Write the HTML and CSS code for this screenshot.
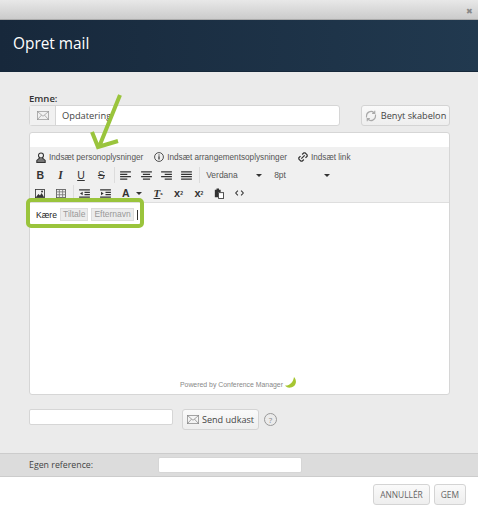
FILE: index.html
```html
<!DOCTYPE html>
<html lang="en">
<head>
    <meta charset="UTF-8">
    <title>Opret mail</title>
    <link rel="stylesheet" href="styles.css">
</head>
<body>
    <div class="titlebar"><span class="close">&#10006;</span></div>
    <div class="header"><h1>Opret mail</h1></div>

    <div class="content">
        <label class="subject-label">Emne:</label>
        <div class="subject-row">
            <div class="input-group">
                <span class="addon">
                    <svg width="12" height="9" viewBox="0 0 16 12" fill="none" stroke="#999"><rect x="0.500" y="0.500" width="15" height="11"/><path d="M1 1l7 6 7-6M1 11l5-5.500M15 11l-5-5.500"/></svg>
                </span>
                <span class="subject-input">Opdatering</span>
            </div>
            <button class="btn template-btn">
                <svg width="12" height="12" viewBox="0 0 16 16" fill="none" stroke="#aaa" stroke-width="1.500"><path d="M2 10V8a6 6 0 0 1 10-4.500M13 1v3.500H9.500M14 6v2a6 6 0 0 1-10 4.500M3 15v-3.500h3.500"/></svg>
                Benyt skabelon
            </button>
        </div>

        <div class="editor">
            <div class="toolbar">
                <div class="tool-row insert-row">
                    <span class="insert-item">
                        <svg width="10" height="11" viewBox="0 0 12 13" fill="none" stroke="#333" stroke-width="1.300"><circle cx="6" cy="4" r="3"/><path d="M4.500 7L1 10v2.500h10V10L7.500 7" fill="#777"/></svg>
                        Indsæt personoplysninger
                    </span>
                    <span class="insert-item">
                        <svg width="10" height="10" viewBox="0 0 12 12" fill="none" stroke="#333"><circle cx="6" cy="6" r="5.300"/><path d="M6 5v4M6 3v1.200" stroke-width="1.500"/></svg>
                        Indsæt arrangementsoplysninger
                    </span>
                    <span class="insert-item">
                        <svg width="10" height="10" viewBox="0 0 12 12" fill="none" stroke="#333" stroke-width="1.500"><path d="M5 3l2-2h1.500L11 3.500V5L9 7M7 9l-2 2H3.500L1 8.500V7l2-2M4 8l4-4"/></svg>
                        Indsæt link
                    </span>
                </div>

                <div class="tool-row">
                    <span class="tool bold">B</span>
                    <span class="tool italic serif">I</span>
                    <span class="tool underline">U</span>
                    <span class="tool strike">S</span>
                    <span class="sep"></span>
                    <span class="tool"><svg width="11" height="9" viewBox="0 0 12 10" stroke="#333" stroke-width="1.400"><path d="M0 1h12M0 3.700h8M0 6.300h12M0 9h8"/></svg></span>
                    <span class="tool"><svg width="11" height="9" viewBox="0 0 12 10" stroke="#333" stroke-width="1.400"><path d="M0 1h12M2 3.700h8M0 6.300h12M2 9h8"/></svg></span>
                    <span class="tool"><svg width="11" height="9" viewBox="0 0 12 10" stroke="#333" stroke-width="1.400"><path d="M0 1h12M4 3.700h8M0 6.300h12M4 9h8"/></svg></span>
                    <span class="tool"><svg width="11" height="9" viewBox="0 0 12 10" stroke="#333" stroke-width="1.400"><path d="M0 1h12M0 3.700h12M0 6.300h12M0 9h12"/></svg></span>
                    <span class="sep"></span>
                    <span class="select">Verdana<i class="caret"></i></span>
                    <span class="select">8pt<i class="caret"></i></span>
                </div>

                <div class="tool-row">
                    <span class="tool"><svg width="10" height="9" viewBox="0 0 12 11"><rect x="0.500" y="0.500" width="11" height="10" fill="none" stroke="#333"/><path d="M1 10l3-4 2 2 2-3 3 5z" fill="#333"/><circle cx="8.500" cy="3" r="1.200" fill="#333"/></svg></span>
                    <span class="tool"><svg width="10" height="9" viewBox="0 0 12 11" fill="none" stroke="#555"><rect x="0.500" y="0.500" width="11" height="10"/><path d="M0 3.500h12M0 7h12M4 1v10M8 1v10" stroke="#777"/></svg></span>
                    <span class="sep"></span>
                    <span class="tool"><svg width="11" height="9" viewBox="0 0 12 10" stroke="#333" stroke-width="1.400"><path d="M0 1h12M6 3.700h6M6 6.300h6M0 9h12"/><path d="M4 3L1 5l3 2z" fill="#333" stroke="none"/></svg></span>
                    <span class="tool"><svg width="11" height="9" viewBox="0 0 12 10" stroke="#333" stroke-width="1.400"><path d="M0 1h12M6 3.700h6M6 6.300h6M0 9h12"/><path d="M1 3l3 2-3 2z" fill="#333" stroke="none"/></svg></span>
                    <span class="tool bold color-a">A</span>
                    <span class="color-caret"><i class="caret"></i></span>
                    <span class="tool clear"><span class="italic underline">T</span><sub>x</sub></span>
                    <span class="tool script">x<sub>2</sub></span>
                    <span class="tool script">x<sup>2</sup></span>
                    <span class="tool"><svg width="10" height="11" viewBox="0 0 12 13"><path d="M1 2h7v3H5v6H1z" fill="#333"/><rect x="3" y="0.500" width="3" height="2.500" fill="#333"/><rect x="5.500" y="5.500" width="6" height="7" fill="#fff" stroke="#333"/></svg></span>
                    <span class="tool"><svg width="9" height="6" viewBox="0 0 11 7" fill="none" stroke="#333" stroke-width="1.300"><path d="M3.500 0.500L0.800 3.500l2.700 3M7.500 0.500l2.700 3-2.700 3"/></svg></span>
                </div>
            </div>

            <div class="editor-body">
                <div class="editor-text">
                    <span>Kære</span>
                    <span class="merge-tag">Tiltale</span>
                    <span class="merge-tag">Efternavn</span>
                    <span class="cursor"></span>
                </div>
                <div class="powered">
                    Powered by Conference Manager
                    <svg width="12" height="11" viewBox="0 0 12 11"><path d="M9 0c3 3 3 9-3 10.500C3 11 1 10 0 8.500 4 9 8 6 9 0z" fill="#a6c632"/></svg>
                </div>
            </div>

            <!-- annotations on top of the editor -->
            <svg class="arrow" width="70" height="70" viewBox="0 0 70 70" fill="none" stroke="#9ac43c" stroke-width="4">
                <path d="M56 2L35 54M28 39l6 15 20-6"/>
            </svg>
            <div class="highlight"></div>
        </div>

        <div class="draft-row">
            <span class="draft-input"></span>
            <button class="btn send-btn">
                <svg width="12" height="9" viewBox="0 0 16 12" fill="none" stroke="#888"><rect x="0.500" y="0.500" width="15" height="11"/><path d="M1 1l7 6 7-6M1 11l5-5.500M15 11l-5-5.500"/></svg>
                Send udkast
            </button>
            <span class="help">?</span>
        </div>
    </div>

    <div class="reference-row">
        <span class="reference-label">Egen reference:</span>
        <span class="reference-input"></span>
    </div>

    <div class="footer">
        <button class="btn footer-btn">ANNULLÉR</button>
        <button class="btn footer-btn">GEM</button>
    </div>
</body>
</html>
```

FILE: styles.css
```css
body {
    margin: 0;
    width: 478px;
    height: 511px;
    overflow: hidden;
    display: flex;
    flex-direction: column;
    background: #fff;
    font-family: "Open Sans", sans-serif;
    color: #444;
}

.titlebar {
    height: 19px;
    flex-shrink: 0;
    display: flex;
    justify-content: flex-end;
    align-items: center;
    padding-right: 5px;
    background: linear-gradient(#e8e8e8, #cbcbcb);
    border-bottom: 1px solid #aaa;
}

.close {
    font-size: 8px;
    color: #888;
    padding-top: 1px;
}

.header {
    height: 51px;
    box-sizing: content-box;
    flex-shrink: 0;
    display: flex;
    align-items: flex-start;
    padding-left: 13px;
    background: linear-gradient(90deg, #17283b, #21394f);
    border-bottom: 1px solid #16283a;
}

.header h1 {
    margin: 13px 0 0;
    font-size: 15.400px;
    line-height: 21px;
    font-weight: 400;
    color: #fff;
}

.content {
    height: 381px;
    flex-shrink: 0;
    box-sizing: border-box;
    padding: 21px 28px 0 29px;
    background: #ebebeb;
}

.subject-label {
    display: block;
    height: 12px;
    font-size: 9.500px;
    line-height: 11px;
    font-weight: 600;
    color: #333;
}

.subject-row {
    display: flex;
    justify-content: space-between;
    align-items: flex-start;
}

.input-group {
    display: flex;
    width: 311px;
    height: 21px;
    box-sizing: border-box;
    border: 1px solid #d6d6d6;
    border-radius: 3px;
    background: #fff;
}

.addon {
    width: 25px;
    display: flex;
    justify-content: center;
    align-items: center;
    background: #f1f1f1;
    border-right: 1px solid #d6d6d6;
}

.subject-input {
    padding-left: 6px;
    font-size: 9.300px;
    line-height: 19px;
}

.btn {
    display: flex;
    align-items: center;
    justify-content: center;
    padding: 0;
    box-sizing: border-box;
    border: 1px solid #d4d4d4;
    border-radius: 3px;
    background: linear-gradient(#fafafa, #eeeeee);
    font-family: "Open Sans", sans-serif;
    color: #444;
    white-space: nowrap;
}

.template-btn {
    width: 89px;
    height: 21px;
    gap: 4px;
    font-size: 9.200px;
}

.editor {
    position: relative;
    width: 421px;
    height: 263px;
    box-sizing: border-box;
    margin-top: 6px;
    padding-top: 14px;
    border: 1px solid #d6d6d6;
    border-radius: 3px;
    background: #fff;
    font-family: "Liberation Sans", sans-serif;
}

.toolbar {
    height: 56px;
    box-sizing: border-box;
    padding: 1px 0 0 0;
    background: #f0f0f0;
    border-bottom: 1px solid #dedede;
}

.tool-row {
    display: flex;
    align-items: center;
    height: 18px;
    font-size: 8.200px;
    color: #555;
}

.insert-row {
    gap: 11px;
    padding-left: 6px;
}

.insert-item {
    display: flex;
    align-items: center;
    gap: 3px;
}

.tool {
    width: 20.400px;
    height: 16px;
    flex-shrink: 0;
    display: flex;
    justify-content: center;
    align-items: center;
    font-size: 10.500px;
    color: #333;
}

.bold {
    font-weight: bold;
}

.italic {
    font-style: italic;
}

.serif {
    font-family: "Liberation Serif", serif;
    font-weight: bold;
    font-size: 11.500px;
}

.underline {
    text-decoration: underline;
}

.strike {
    text-decoration: line-through;
}

.sep {
    width: 1px;
    height: 16px;
    margin: 0 1px 0 2px;
    background: #dcdcdc;
}

.select {
    width: 68px;
    display: flex;
    justify-content: space-between;
    align-items: center;
    box-sizing: border-box;
    padding: 0 7px 0 5px;
    font-size: 8.500px;
    color: #555;
}

.caret {
    display: block;
    width: 0;
    border-top: 3px solid #333;
    border-left: 3px solid transparent;
    border-right: 3px solid transparent;
}

.color-caret {
    width: 12px;
    flex-shrink: 0;
}

.clear sub,
.script sub,
.script sup {
    font-size: 5px;
}

.clear {
    font-family: "Liberation Serif", serif;
    font-weight: bold;
    font-size: 11px;
}

.script {
    font-size: 11px;
    font-weight: bold;
}

.editor-body {
    position: relative;
    height: 190px;
    font-size: 8.600px;
}

.editor-text {
    display: flex;
    align-items: center;
    gap: 3px;
    padding: 5px 0 0 6px;
    color: #222;
}

.merge-tag {
    padding: 1px 2px;
    font-size: 8.500px;
    line-height: 9px;
    color: #999;
    background: #ececec;
    border: 1px solid #ddd;
}

.cursor {
    width: 1px;
    height: 10px;
    background: #333;
}

.powered {
    position: absolute;
    right: 152px;
    bottom: 5px;
    display: flex;
    align-items: flex-end;
    gap: 2px;
    font-size: 6.900px;
    color: #888;
}

.arrow {
    position: absolute;
    left: 34px;
    top: -40px;
}

.highlight {
    position: absolute;
    left: -4px;
    top: 65px;
    width: 118px;
    height: 30px;
    box-sizing: border-box;
    border: 4px solid #9ac43c;
    border-radius: 5px;
}

.draft-row {
    display: flex;
    align-items: flex-start;
    margin-top: 14px;
}

.draft-input {
    width: 144px;
    height: 16px;
    box-sizing: border-box;
    border: 1px solid #d6d6d6;
    border-radius: 2px;
    background: #fff;
}

.send-btn {
    width: 77px;
    height: 21px;
    margin-left: 9px;
    gap: 3px;
    font-size: 9.100px;
}

.help {
    width: 11px;
    height: 11px;
    margin: 4px 0 0 5px;
    border: 1px solid #999;
    border-radius: 50%;
    text-align: center;
    font-size: 8px;
    line-height: 11px;
    color: #888;
}

.reference-row {
    height: 24px;
    flex-shrink: 0;
    display: flex;
    align-items: center;
    box-sizing: border-box;
    padding-left: 29px;
    background: #dcdcdc;
    border-top: 1px solid #cccccc;
    border-bottom: 1px solid #cccccc;
}

.reference-label {
    width: 129px;
    font-size: 8.800px;
}

.reference-input {
    width: 144px;
    height: 16px;
    box-sizing: border-box;
    border: 1px solid #d6d6d6;
    border-radius: 2px;
    background: #fff;
}

.footer {
    display: flex;
    justify-content: flex-end;
    gap: 4px;
    padding: 7px 12px 0 0;
}

.footer-btn {
    height: 21px;
    min-width: 32px;
    padding: 0 6px;
    font-size: 8.400px;
    color: #666;
}
```
